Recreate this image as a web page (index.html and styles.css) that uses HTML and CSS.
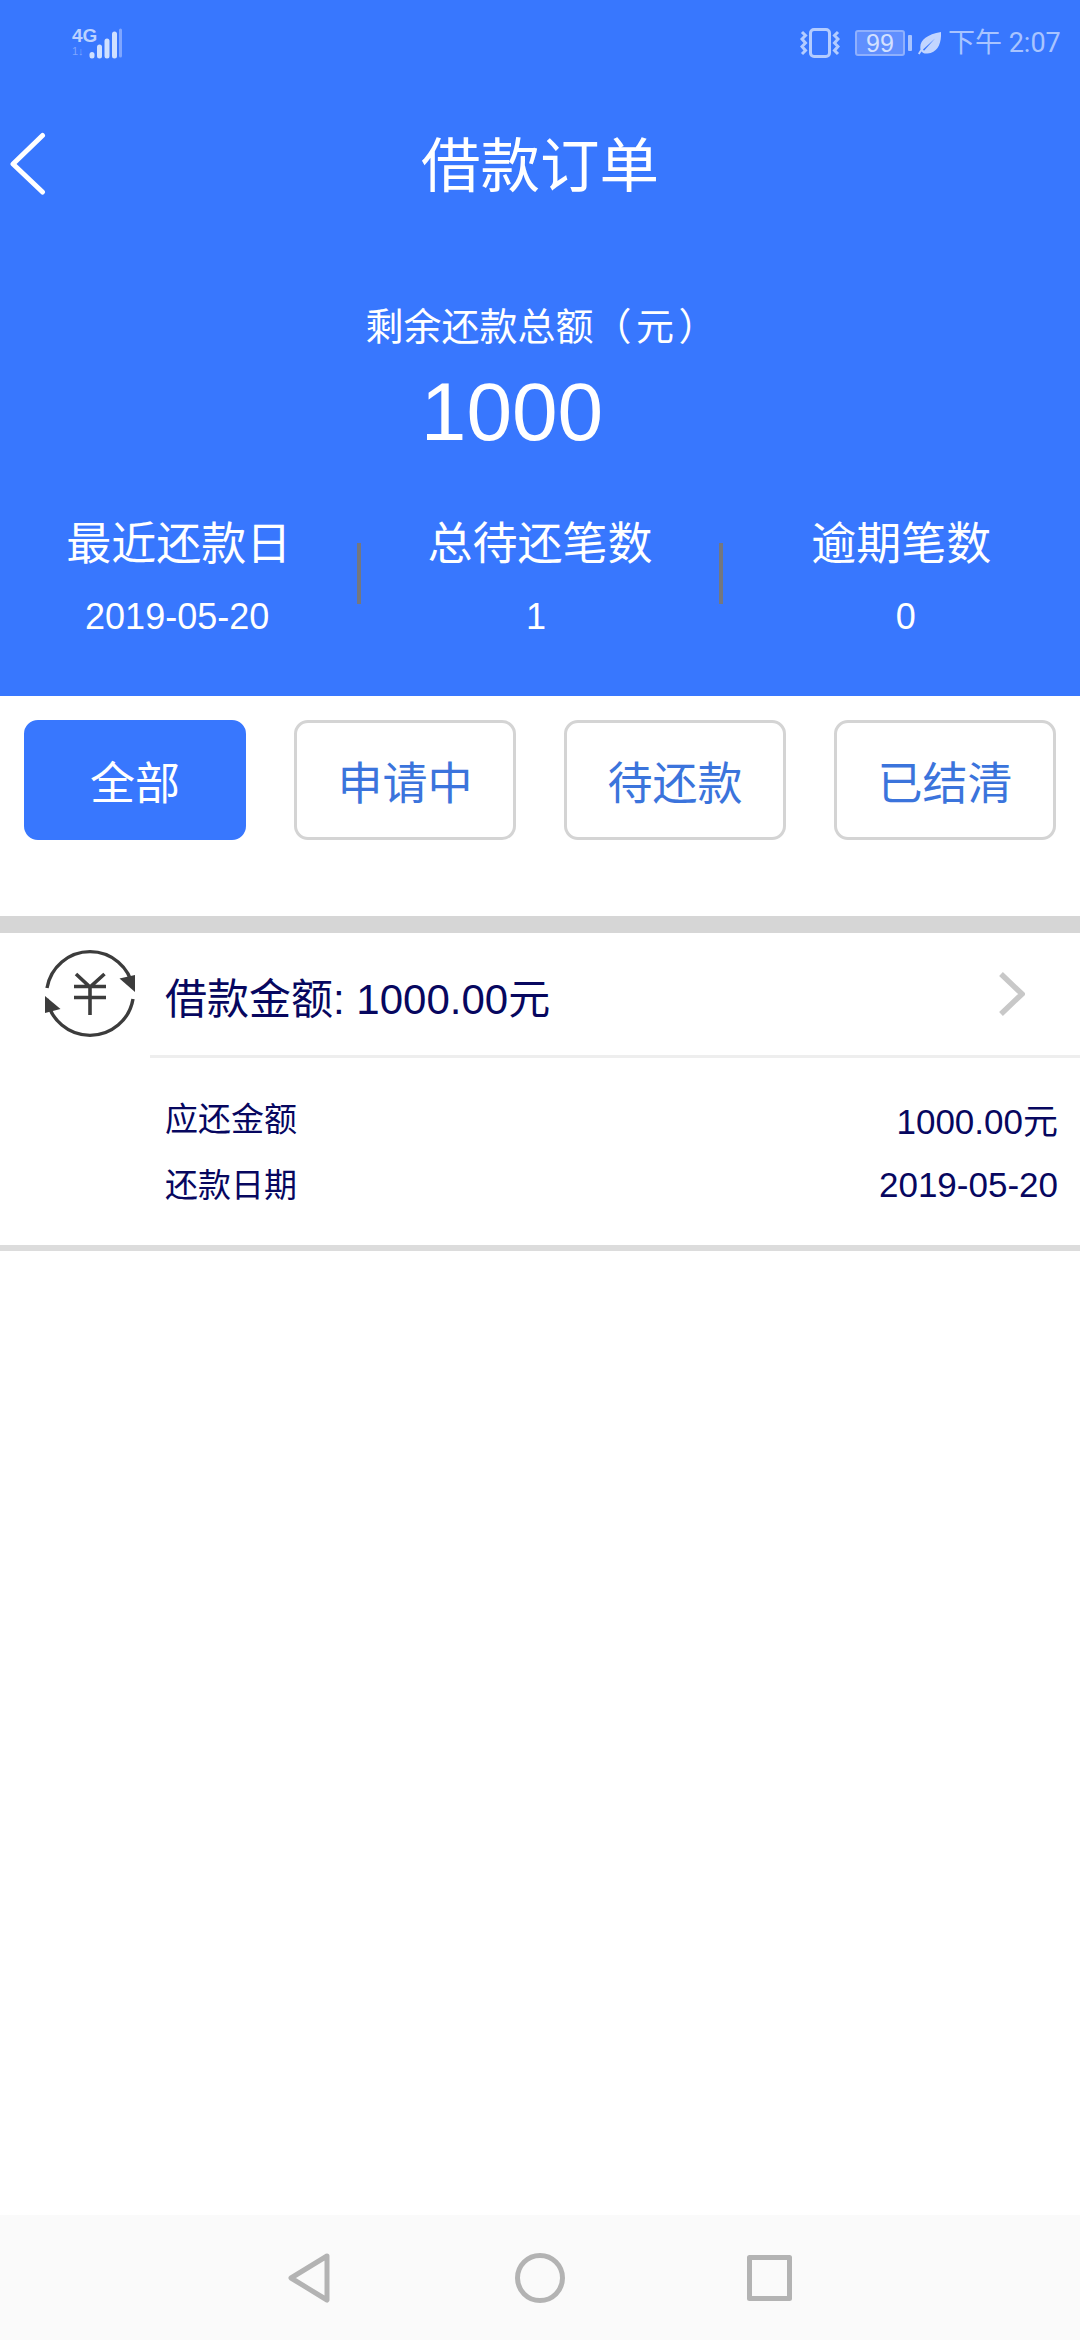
FILE: index.html
```html
<!DOCTYPE html>
<html lang="zh-CN">
<head>
<meta charset="utf-8">
<title>借款订单</title>
<link rel="stylesheet" href="styles.css">
</head>
<body>
<div class="page">
  <header class="hero">
    <div class="status">
      <div class="net">
        <div class="net-text"><span class="net-4g">4G</span><span class="net-arrows">1↓</span></div>
        <svg class="signal" width="34" height="32" viewBox="0 0 34 32">
          <g stroke-linecap="round" stroke-width="5" stroke="#cfe0ff" fill="none">
            <path d="M3 27.500v1.500"/><path d="M10.500 20v9"/><path d="M18 14v15"/><path d="M25.500 7v22"/>
            <path d="M31.500 3v26" stroke="#7fa6ff" stroke-width="3"/>
          </g>
        </svg>
      </div>
      <div class="sys">
        <svg class="vib" width="40" height="30" viewBox="0 0 40 30" fill="none" stroke="#b3ccff">
          <rect x="10.500" y="1.500" width="19" height="27" rx="3.500" stroke-width="3"/>
          <path d="M2 4l3.500 3.500-3.500 3.500 3.500 4-3.500 3.500 3.500 4-3.500 3.500" stroke-width="3"/>
          <path d="M38 4l-3.500 3.500 3.500 3.500-3.500 4 3.500 3.500-3.500 4 3.500 3.500" stroke-width="3"/>
        </svg>
        <div class="batt">
          <div class="batt-body">99</div>
          <div class="batt-nub"></div>
        </div>
        <svg class="leaf" width="23" height="23" viewBox="0 0 23 23">
          <path fill="#c2d5ff" fill-rule="evenodd" d="M23 0C23.500 11 20 20.500 9.500 21.500 6.500 21.800 4.500 21 3.500 19.500L1.500 22.500 0 21.500 2.500 17.500C1 9 8 2.500 23 0ZM17 6.500 5 17.500l1 1.200L17 6.500Z"/>
        </svg>
        <span class="clock">下午 2:07</span>
      </div>
    </div>
    <div class="bar">
      <svg class="back" width="36" height="64" viewBox="0 0 36 64" fill="none" stroke="#fff" stroke-width="5" stroke-linecap="round" stroke-linejoin="round">
        <path d="M32.500 3.500 3 32l29.500 28"/>
      </svg>
      <h1 class="title">借款订单</h1>
      <span></span>
    </div>
    <div class="sum-label">剩余还款总额（ 元 ）</div>
    <div class="sum-value">1000</div>
    <div class="stats">
      <div class="stat">
        <div class="stat-label">最近还款日</div>
        <div class="stat-value stat-value-a">2019-05-20</div>
      </div>
      <div class="sep"></div>
      <div class="stat">
        <div class="stat-label">总待还笔数</div>
        <div class="stat-value stat-value-b">1</div>
      </div>
      <div class="sep"></div>
      <div class="stat">
        <div class="stat-label">逾期笔数</div>
        <div class="stat-value stat-value-c">0</div>
      </div>
    </div>
  </header>

  <nav class="tabs">
    <div class="tab tab-on">全部</div>
    <div class="tab">申请中</div>
    <div class="tab">待还款</div>
    <div class="tab">已结清</div>
  </nav>
  <div class="band"></div>

  <section class="order">
    <div class="order-head">
      <svg class="yen" width="90" height="90" viewBox="0 0 90 90" fill="none" stroke="#3c3c3c">
        <path d="M2 39A43.600 43.600 0 0 1 88 39" stroke-width="3.400"/>
        <path d="M88 50A43.600 43.600 0 0 1 2 50" stroke-width="3.400"/>
        <path d="M90 43 74.500 29.500 90 26Z" fill="#3c3c3c" stroke="none"/>
        <path d="M0 47 15.500 60 0 64Z" fill="#3c3c3c" stroke="none"/>
        <path d="M31 25 45 38 59.500 25M29 37.500H61M29 48.500H61M45 38V66" stroke-width="3.600"/>
      </svg>
      <div class="order-title">借款金额: 1000.00元</div>
      <svg class="more" width="26" height="44" viewBox="0 0 26 44" fill="none" stroke="#c8c8c8" stroke-width="5.500">
        <path d="M2 2l21 20L2 42"/>
      </svg>
    </div>
    <div class="order-body">
      <div class="row"><span>应还金额</span><span class="row-val">1000.00元</span></div>
      <div class="row"><span>还款日期</span><span class="row-val">2019-05-20</span></div>
    </div>
  </section>

  <footer class="sysnav">
    <svg width="42" height="50" viewBox="0 0 42 50" fill="none" stroke="#b3b3b3" stroke-width="5" stroke-linejoin="round">
      <path d="M39 3 3 25l36 22Z"/>
    </svg>
    <svg class="sysnav-home" width="50" height="50" viewBox="0 0 50 50" fill="none" stroke="#b3b3b3" stroke-width="5">
      <circle cx="25" cy="25" r="22.500"/>
    </svg>
    <svg width="45" height="46" viewBox="0 0 45 46" fill="none" stroke="#b3b3b3" stroke-width="5" stroke-linejoin="round">
      <rect x="2.500" y="2.500" width="40" height="41"/>
    </svg>
  </footer>
</div>
</body>
</html>
```

FILE: styles.css
```css
* { box-sizing: border-box; }
html, body { margin: 0; padding: 0; }
body {
  background: #fff;
  font-family: "Liberation Sans", "Noto Sans CJK SC", sans-serif;
}
.page {
  width: 1080px;
  height: 2340px;
  display: flex;
  flex-direction: column;
  overflow: hidden;
}

/* Blue header */
.hero {
  height: 696px;
  background: #3877fe;
  color: #fff;
  display: flex;
  flex-direction: column;
  flex: none;
}
.status {
  height: 86px;
  padding: 0 20px 0 72px;
  display: flex;
  align-items: center;
  justify-content: space-between;
}
.net { display: flex; align-items: flex-end; height: 32px; }
.net-text { display: flex; flex-direction: column; width: 17px; }
.net-4g {
  font-family: "Liberation Sans Narrow", "Liberation Sans", sans-serif;
  font-size: 19px;
  line-height: 17px;
  font-weight: 700;
  color: #bcd2ff;
}
.net-arrows {
  font-size: 11px;
  line-height: 15px;
  color: #7fa6ff;
}
.sys { display: flex; align-items: center; }
.vib { margin-right: 15px; }
.batt { display: flex; align-items: center; margin-right: 6px; }
.batt-body {
  width: 50px;
  height: 26px;
  border: 2px solid #8fb0fd;
  border-radius: 3px;
  background: #608ffe;
  color: #d3e1ff;
  font-size: 25px;
  line-height: 22px;
  text-align: center;
}
.batt-nub {
  width: 4px;
  height: 16px;
  margin-left: 3px;
  border-radius: 1px;
  background: #a9c4ff;
}
.leaf { margin-right: 7px; }
.clock {
  width: 112px;
  font-family: "Roboto", "Noto Sans CJK SC", sans-serif;
  font-size: 27px;
  font-weight: 400;
  line-height: 32px;
  color: #a9c4ff;
  white-space: nowrap;
}

.bar {
  height: 156px;
  padding-left: 10px;
  display: grid;
  grid-template-columns: 1fr auto 1fr;
  align-items: center;
}
.title {
  margin: 6px 0 0 -10px;
  font-size: 59.500px;
  line-height: 150px;
  font-weight: 400;
}
.sum-label {
  margin-top: 60px;
  height: 50px;
  font-size: 38px;
  line-height: 50px;
  text-align: center;
  padding-left: 2px;
  word-spacing: -6px;
  white-space: pre;
}
.sum-value {
  margin-top: 10px;
  height: 100px;
  font-size: 82px;
  line-height: 100px;
  text-align: center;
  padding-right: 56px;
}
.stats {
  margin-top: 59px;
  display: grid;
  grid-template-columns: 1fr 4px 1fr 4px 1fr;
}
.stat { text-align: center; }
.stat-label { font-size: 45px; line-height: 48px; }
.stat-value { margin-top: 24px; font-size: 36px; line-height: 48px; }
.stat-value-a { padding-right: 3px; }
.stat-value-b { padding-right: 8px; }
.stat-value-c { padding-left: 9px; }
.sep {
  margin-top: 22px;
  height: 61px;
  background: #74777f;
}

/* Filter tabs */
.tabs {
  flex: none;
  height: 220px;
  padding: 24px 24px 0;
  display: flex;
  justify-content: space-between;
  align-items: flex-start;
}
.tab {
  width: 222px;
  height: 120px;
  padding-top: 6px;
  border: 3px solid #d4d4d4;
  border-radius: 14px;
  color: #3b74dc;
  font-size: 45px;
  line-height: 112px;
  text-align: center;
}
.tab-on {
  background: #3877fe;
  border-color: #3877fe;
  color: #fff;
}
.band { flex: none; height: 17px; background: #d6d6d6; }

/* Order card */
.order {
  flex: none;
  height: 318px;
  border-bottom: 6px solid #dcdcdc;
  color: #07075f;
}
.order-head {
  position: relative;
  height: 125px;
  padding: 16px 56px 0 45px;
  display: flex;
  align-items: flex-start;
}
.order-head::after {
  content: "";
  position: absolute;
  left: 150px;
  right: 0;
  bottom: 0;
  height: 3px;
  background: #eeeeee;
}
.yen { flex: none; }
.order-title {
  flex: 1;
  margin: 7px 0 0 30px;
  font-size: 42px;
  line-height: 88px;
  white-space: nowrap;
}
.more { flex: none; margin-top: 23px; margin-right: -1px; }
.order-body { padding: 26px 22px 0 165px; }
.row {
  height: 66px;
  display: flex;
  justify-content: space-between;
  align-items: center;
  font-size: 33px;
}
.row-val { font-size: 35px; margin-top: 3px; }

/* System nav */
.sysnav {
  margin-top: auto;
  flex: none;
  height: 125px;
  background: #fafafa;
  display: grid;
  grid-template-columns: 42px 50px 45px;
  justify-content: space-between;
  align-items: center;
  padding: 0 288px;
}
.sysnav-home { margin-left: 1px; }
```
